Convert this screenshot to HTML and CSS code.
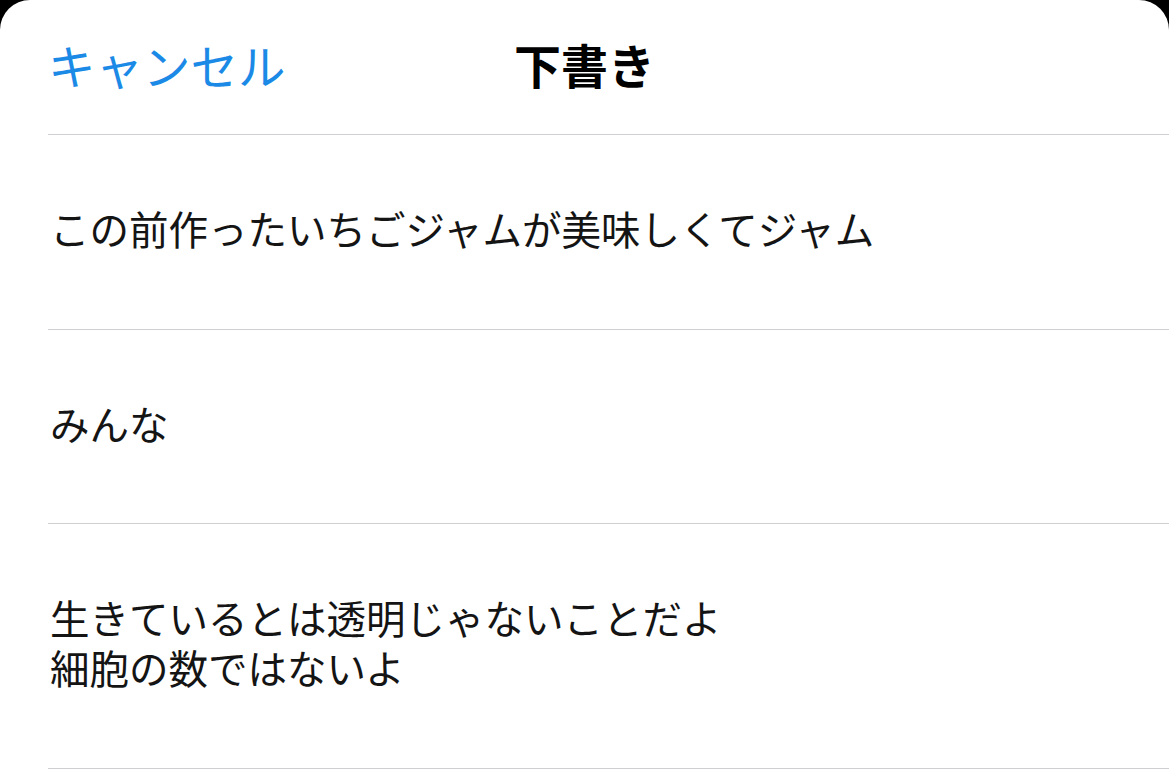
FILE: index.html
```html
<!DOCTYPE html>
<html lang="ja">
<head>
  <meta charset="utf-8">
  <title>下書き</title>
  <link rel="stylesheet" href="styles.css">
</head>
<body>
  <div class="sheet">
    <header class="header">
      <a class="cancel" href="#">キャンセル</a>
      <h1 class="title">下書き</h1>
    </header>
    <ul class="drafts">
      <li class="draft">この前作ったいちごジャムが美味しくてジャム</li>
      <li class="draft">みんな</li>
      <li class="draft"><span class="line">生きているとは透明じゃないことだよ</span><span class="line">細胞の数ではないよ</span></li>
    </ul>
  </div>
</body>
</html>
```

FILE: styles.css
```css
body {
  margin: 0;
  background-color: black;
  font-family: "Noto Sans CJK JP", "Noto Sans", sans-serif;
  color: #141414;
  overflow: hidden;
}

h1, ul {
  margin: 0;
  padding: 0;
}

.sheet {
  height: 100vh;
  border-radius: 30px 30px 0 0;
  background-color: white;
}

.header {
  position: relative;
  height: 134px;
  margin-left: 48px;
  border-bottom: 1px solid #cfcfd2;
  display: flex;
  align-items: center;
}

.cancel {
  color: #1b8ae6;
  font-size: 47.5px;
  line-height: 1;
  text-decoration: none;
  margin-top: -5px;
}

.title {
  position: absolute;
  left: -48px;
  right: 0;
  text-align: center;
  font-size: 47px;
  font-weight: bold;
  line-height: 1;
  color: black;
  pointer-events: none;
  margin-top: -7px;
}

.drafts {
  list-style: none;
  margin-left: 48px;
}

.draft {
  padding: 68px 0 75.5px 2px;
  border-bottom: 1px solid #cfcfd2;
  font-size: 39.5px;
  line-height: 50px;
}

.line {
  display: block;
  height: 50px;
}
```
